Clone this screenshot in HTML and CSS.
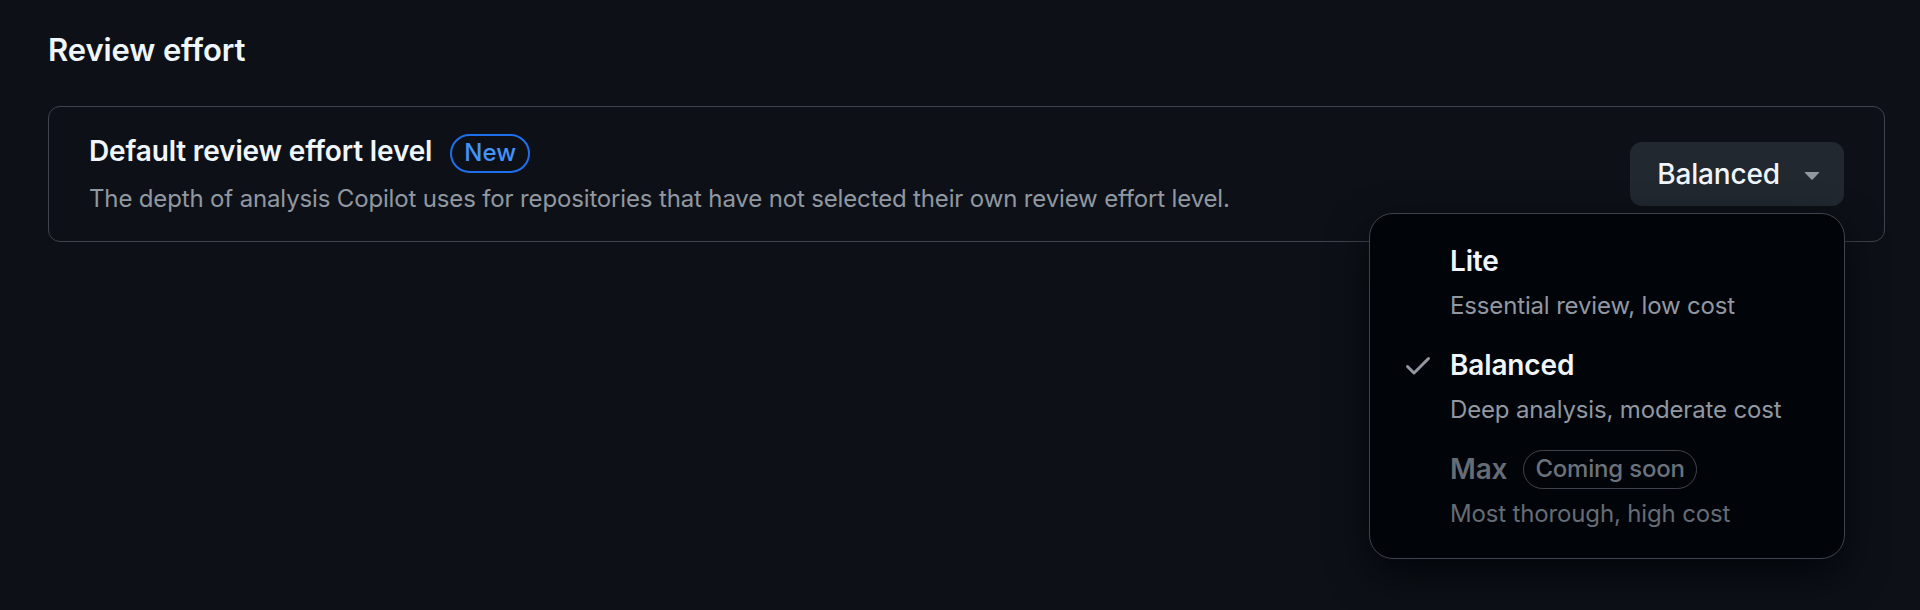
FILE: index.html
```html
<!DOCTYPE html>
<html lang="en">
<head>
<meta charset="utf-8">
<title>Review effort</title>
<link rel="stylesheet" href="styles.css">
</head>
<body>
<div class="page">
  <h2 class="heading">Review effort</h2>
  <div class="card">
    <div class="info">
      <div class="title-row">
        <span class="title">Default review effort level</span>
        <span class="label label-new">New</span>
      </div>
      <p class="desc">The depth of analysis Copilot uses for repositories that have not selected their own review effort level.</p>
    </div>
    <div class="select">
      <button class="btn" type="button">
        <span class="btn-text">Balanced</span>
        <svg class="caret" viewBox="0 0 16 16" width="32" height="32" aria-hidden="true"><path d="m4.427 7.427 3.396 3.396a.25.25 0 0 0 .354 0l3.396-3.396A.25.25 0 0 0 11.396 7H4.604a.25.25 0 0 0-.177.427Z"/></svg>
      </button>
      <div class="menu">
        <ul class="list">
          <li class="item">
            <span class="lead"></span>
            <div class="item-body">
              <div class="item-title-row"><span class="item-title">Lite</span></div>
              <div class="item-desc">Essential review, low cost</div>
            </div>
          </li>
          <li class="item">
            <span class="lead">
              <svg class="check" viewBox="0 0 16 16" width="32" height="32" aria-hidden="true"><path d="M13.78 4.22a.75.75 0 0 1 0 1.06l-7.25 7.25a.75.75 0 0 1-1.06 0L2.22 9.28a.751.751 0 0 1 .018-1.042.751.751 0 0 1 1.042-.018L6 10.94l6.72-6.72a.75.75 0 0 1 1.06 0Z"/></svg>
            </span>
            <div class="item-body">
              <div class="item-title-row"><span class="item-title">Balanced</span></div>
              <div class="item-desc">Deep analysis, moderate cost</div>
            </div>
          </li>
          <li class="item item-disabled">
            <span class="lead"></span>
            <div class="item-body">
              <div class="item-title-row"><span class="item-title">Max</span><span class="label label-muted">Coming soon</span></div>
              <div class="item-desc">Most thorough, high cost</div>
            </div>
          </li>
        </ul>
      </div>
    </div>
  </div>
</div>
</body>
</html>
```

FILE: styles.css
```css
* { box-sizing: border-box; }

html, body {
  margin: 0;
  background: #0d1117;
  color: #f0f6fc;
  font-family: Inter, "Noto Sans", "Liberation Sans", sans-serif;
}

.page {
  min-height: 610px;
  padding: 26px 35px 0 48px;
}

.heading {
  margin: 0 0 32px;
  font-size: 31px;
  line-height: 48px;
  font-weight: 600;
  letter-spacing: -0.1px;
  color: #f0f6fc;
}

.card {
  display: flex;
  align-items: center;
  justify-content: space-between;
  border: 1px solid #3d444d;
  border-radius: 12px;
  padding: 24px 40px;
}

.title-row {
  display: flex;
  align-items: center;
  gap: 18px;
  height: 40px;
}

.title {
  font-size: 28px;
  line-height: 40px;
  font-weight: 600;
  letter-spacing: -0.15px;
  color: #f0f6fc;
}

.label {
  display: inline-flex;
  align-items: center;
  height: 39px;
  padding: 0 12px;
  border: 2px solid #3d444d;
  border-radius: 999px;
  font-size: 24px;
  font-weight: 500;
  line-height: 1;
}

.label-new {
  margin-top: 4px;
  border-color: #1f6feb;
  color: #4493f8;
}

.label-muted {
  padding: 0 11px;
  border-width: 1.5px;
  border-color: #3d444d;
  color: #6b727b;
  letter-spacing: -0.2px;
}

.desc {
  margin: 10px 0 0;
  font-size: 24px;
  line-height: 36px;
  letter-spacing: -0.15px;
  color: #9198a1;
}

.select {
  position: relative;
}

.btn {
  display: flex;
  align-items: center;
  gap: 16px;
  height: 64px;
  padding: 0 16px 0 27px;
  border: 0;
  border-radius: 12px;
  background: #212830;
  color: #f0f6fc;
  font-family: inherit;
  font-size: 28px;
  font-weight: 500;
  letter-spacing: -0.15px;
}

.caret {
  display: block;
  fill: #9198a1;
}

.menu {
  position: absolute;
  top: calc(100% + 7px);
  right: -1px;
  width: 476px;
  background: #010409;
  border: 1px solid #3d444d;
  border-radius: 24px;
  box-shadow: 0 16px 40px rgba(1, 4, 9, 0.8);
  padding: 17px 16px 16px;
  z-index: 10;
}

.list {
  list-style: none;
  margin: 0;
  padding: 0;
  display: flex;
  flex-direction: column;
  gap: 1px;
}

.item {
  display: flex;
  gap: 16px;
  padding: 10px 16px;
}

.lead {
  flex: none;
  display: flex;
  align-items: center;
  width: 32px;
  height: 40px;
}

.check {
  display: block;
  fill: #9198a1;
}

.item-title-row {
  display: flex;
  align-items: center;
  gap: 16px;
  height: 40px;
}

.item-title {
  font-size: 28px;
  line-height: 40px;
  font-weight: 600;
  letter-spacing: -0.15px;
  color: #f0f6fc;
}

.item-desc {
  margin-top: 7px;
  font-size: 24px;
  line-height: 36px;
  letter-spacing: -0.15px;
  color: #9198a1;
}

.item-disabled .item-title,
.item-disabled .item-desc {
  color: #656c76;
}
```
